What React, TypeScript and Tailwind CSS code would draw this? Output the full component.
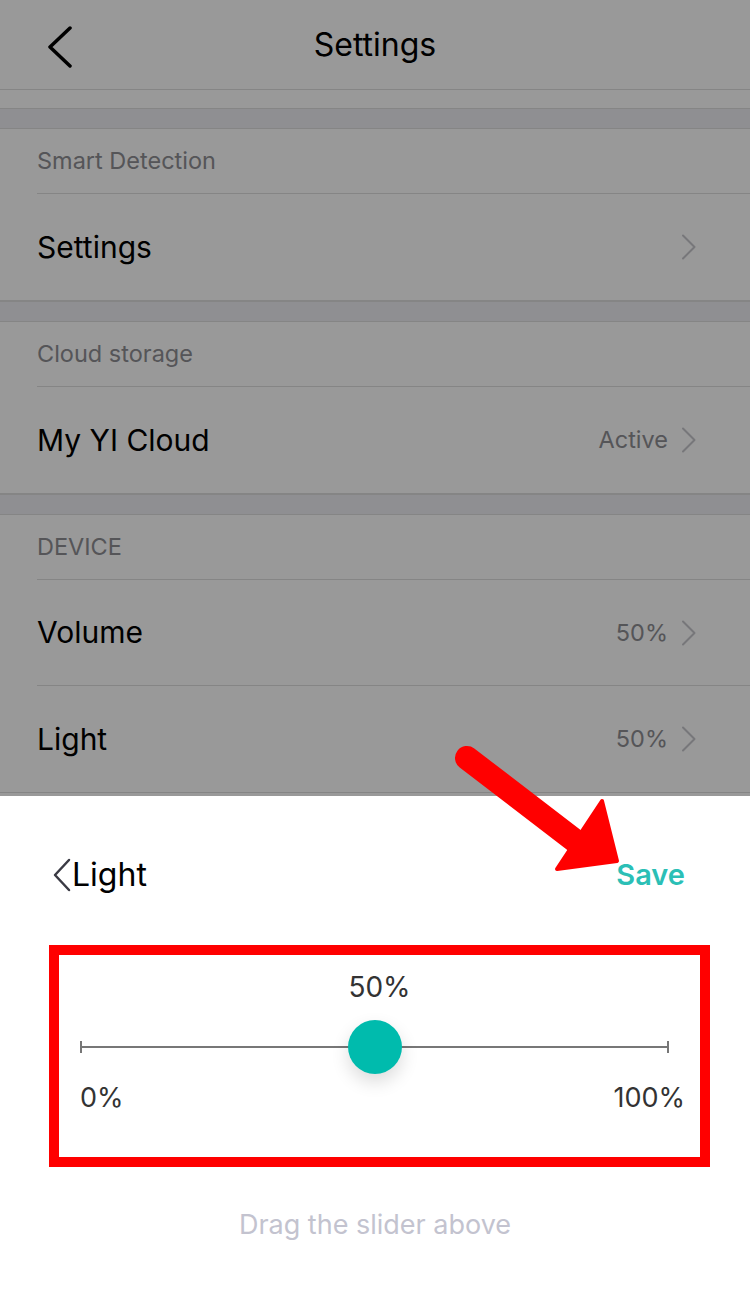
import React from 'react';

const font = { fontFamily: 'Inter, "Noto Sans", sans-serif' };

const Chevron: React.FC = () => (
  <svg width="16" height="26" viewBox="0 0 16 26" fill="none" className="shrink-0">
    <path d="M2 1.5 L13.5 13 L2 24.5" stroke="#c7c7cc" strokeWidth="2" strokeLinecap="round" strokeLinejoin="round" />
  </svg>
);

const Gap: React.FC = () => <div className="h-[21px] bg-[#efeff4] border-y border-[#dedede]" />;

const SectionHeader: React.FC<{ title: string }> = ({ title }) => (
  <div className="ml-[37px] h-[65px] flex items-center border-b border-[#dedede]">
    <span className="text-[23.5px] text-[#8e8e93]">{title}</span>
  </div>
);

const Row: React.FC<{ label: string; value?: string; last?: boolean }> = ({ label, value, last }) => (
  <div className={last ? 'border-b border-[#dedede]' : ''}>
    <div className={`ml-[37px] h-[106px] pr-[53px] flex items-center justify-between ${last ? '' : 'border-b border-[#dedede]'}`}>
      <span className="text-[30px] text-black">{label}</span>
      <div className="flex items-center gap-[13px]">
        {value && <span className="text-[23.5px] text-[#8e8e93]">{value}</span>}
        <Chevron />
      </div>
    </div>
  </div>
);

export default function App() {
  const level = 50;
  return (
    <div className="relative w-[750px] h-[1296px] overflow-hidden bg-white" style={font}>
      {/* settings page underneath */}
      <div className="h-[90px] relative flex items-center justify-center border-b border-[#dedede]">
        <svg width="28" height="42" viewBox="0 0 28 42" fill="none" className="absolute left-[46px] top-[26px]">
          <path d="M24 2 L4 21 L24 40" stroke="#000" strokeWidth="3.5" strokeLinecap="round" strokeLinejoin="round" />
        </svg>
        <span className="text-[32px] text-black">Settings</span>
      </div>
      <div className="h-[18px]" />
      <Gap />
      <SectionHeader title="Smart Detection" />
      <Row label="Settings" last />
      <Gap />
      <SectionHeader title="Cloud storage" />
      <Row label="My YI Cloud" value="Active" last />
      <Gap />
      <SectionHeader title="DEVICE" />
      <Row label="Volume" value="50%" />
      <Row label="Light" value="50%" last />

      {/* dim overlay */}
      <div className="absolute inset-0 bg-black/40" />

      {/* bottom sheet */}
      <div className="absolute inset-x-0 top-[796px] bottom-0 bg-white flex flex-col">
        <div className="mt-[55px] h-[48px] pl-[52px] pr-[65px] flex items-center justify-between">
          <div className="flex items-center">
            <svg width="20" height="34" viewBox="0 0 20 34" fill="none">
              <path d="M17 2 L3 17 L17 32" stroke="#3a3a44" strokeWidth="2.5" strokeLinecap="round" strokeLinejoin="round" />
            </svg>
            <span className="text-[32px] text-black leading-none">Light</span>
          </div>
          <span className="text-[29px] font-semibold text-[#2bbfb6]">Save</span>
        </div>

        <div className="mt-[46px] ml-[49px] w-[661px] h-[222px] border-[10px] border-[#ff0000] flex flex-col">
          <div className="pt-[16px] h-[32px] box-content text-center text-[28px] leading-[32px] text-[#333]">{level}%</div>
          <div className="mt-[17px] pl-[21px] pr-[31px]">
            <div className="relative h-[54px] flex items-center">
              <div className="w-[2px] h-[12px] bg-[#777]" />
              <div className="flex-1 h-[2px] bg-[#777]" />
              <div className="w-[2px] h-[12px] bg-[#777]" />
              <div
                className="absolute top-0 w-[54px] h-[54px] -ml-[27px] rounded-full bg-[#00bbad] shadow-[0_8px_18px_rgba(0,0,0,0.14)]"
                style={{ left: `${level}%` }}
              />
            </div>
          </div>
          <div className="mt-[8px] pl-[21px] pr-[15px] flex justify-between text-[27px] leading-[32px] text-[#333]">
            <span>0%</span>
            <span>100%</span>
          </div>
        </div>

        <div className="mt-[40px] text-center text-[27px] leading-[36px] text-[#c3c3cf]">Drag the slider above</div>
      </div>

      {/* red annotation arrow */}
      <svg width="200" height="150" viewBox="0 0 200 150" fill="none" className="absolute left-[440px] top-[740px]">
        <line x1="27" y1="18" x2="147" y2="110" stroke="#ff0000" strokeWidth="24" strokeLinecap="round" />
        <polygon points="162,61 177,121 117,129" fill="#ff0000" stroke="#ff0000" strokeWidth="4" strokeLinejoin="round" />
      </svg>
    </div>
  );
}
